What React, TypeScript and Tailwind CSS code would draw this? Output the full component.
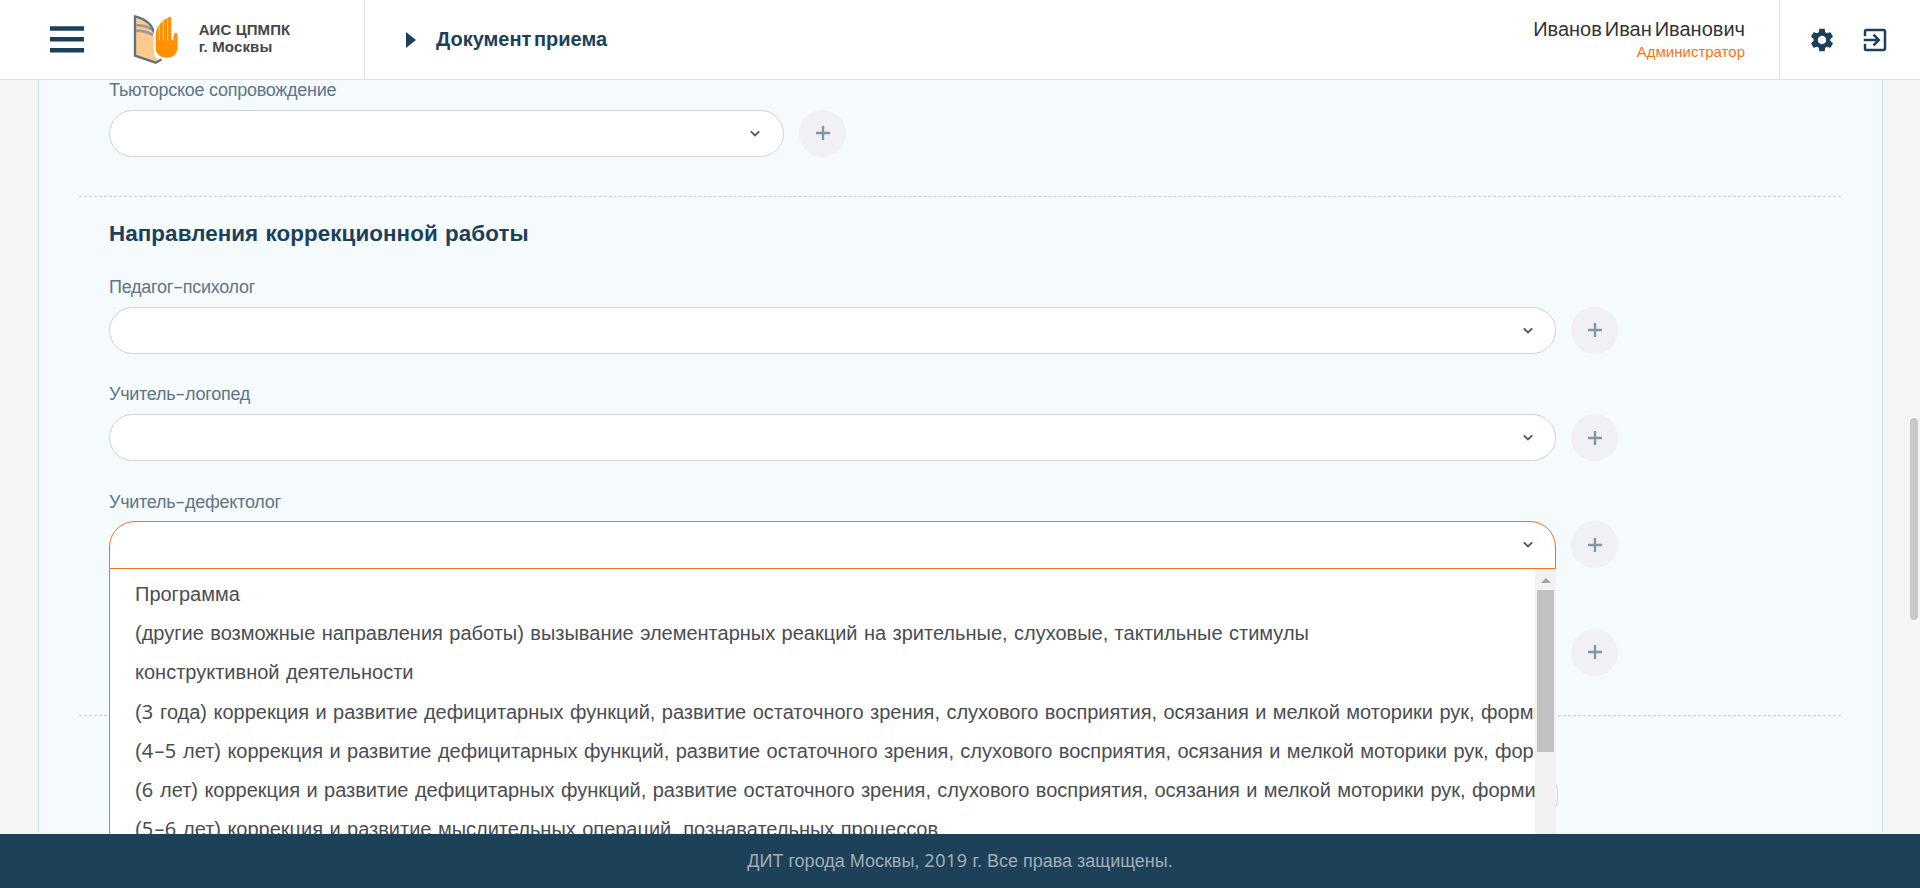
import { Fragment } from "react";
import { MdExitToApp, MdSettings } from "react-icons/md";

const OPTIONS = [
  "Программа",
  "(другие возможные направления работы) вызывание элементарных реакций на зрительные, слуховые, тактильные стимулы",
  "конструктивной деятельности",
  "(3 года) коррекция и развитие дефицитарных функций, развитие остаточного зрения, слухового восприятия, осязания и мелкой моторики рук, формирование",
  "(4-5 лет) коррекция и развитие дефицитарных функций, развитие остаточного зрения, слухового восприятия, осязания и мелкой моторики рук, формирование",
  "(6 лет) коррекция и развитие дефицитарных функций, развитие остаточного зрения, слухового восприятия, осязания и мелкой моторики рук, формирование",
  "(5-6 лет) коррекция и развитие мыслительных операций, познавательных процессов",
];

/** Sets digits in a humanist face and stretches hyphens. */
function Mixed({ text }: { text: string }) {
  return (
    <>
      {text.split(/(\d+|-)/).map((part, i) => {
        if (part === "-") return <span key={i} className="mx-[0.11em] inline-block scale-x-[1.7]">-</span>;
        if (/^\d+$/.test(part)) return <span key={i} className="font-['Noto_Sans',sans-serif] tracking-[0.5px]">{part}</span>;
        return <Fragment key={i}>{part}</Fragment>;
      })}
    </>
  );
}

function Logo() {
  return (
    <svg viewBox="40 24 140 153" className="h-[51px] w-[46.67px]" fill="none">
      <path d="M46 30 C72 36 94 50 104 78 L104 150 L118 164 L108 170 L46 150 Z" fill="#ffca8c" />
      <path d="M50 57 Q78 58 102 73 M50 74 Q76 74 100 87" stroke="#9a9a9c" strokeWidth="8" />
      <path d="M103 80 C98 54 72 36 46 31 V149 L108 170 L126 160" stroke="#5f7480" strokeWidth="7" />
      <path
        d="M108 82 C109 70 120 52 132 43 L148 33 Q155 31 155 38 V98 Q156 104 161 103 L162 88 Q164 80 170 81 Q174 82 174 88 V122 C174 144 160 155 141 155 C121 155 108 145 108 124 Z"
        fill="#fff"
        stroke="#fff"
        strokeWidth="12"
      />
      <path
        d="M108 82 C109 70 120 52 132 43 L148 33 Q155 31 155 38 V98 Q156 104 161 103 L162 88 Q164 80 170 81 Q174 82 174 88 V122 C174 144 160 155 141 155 C121 155 108 145 108 124 Z"
        fill="#ff9100"
      />
      <path d="M119 60 V104 M131 45 V102 M144 38 V103" stroke="#ffd09a" strokeWidth="3" />
    </svg>
  );
}

function AddButton() {
  return (
    <button className="flex size-[47px] shrink-0 items-center justify-center rounded-full bg-[#f0f0f5]">
      <svg viewBox="0 0 14 14" className="size-[14px]">
        <path d="M7 0V14M0 7H14" stroke="#8297a5" strokeWidth="2.4" />
      </svg>
    </button>
  );
}

function Chevron() {
  return (
    <svg viewBox="0 0 12 8" className="mt-[1px] h-[8px] w-[12px]" fill="none">
      <path d="M1.8 1.4L6 5.4L10.2 1.4" stroke="#5a5a5a" strokeWidth="2" />
    </svg>
  );
}

function Dropdown() {
  return (
    <div className="absolute top-[calc(100%+1px)] -right-px -left-px z-10 flex h-[320px] border-l border-[#f37021] bg-white">
      <ul className="min-w-0 flex-1 overflow-hidden pt-[6px] pl-[25px] text-[20px] text-[#4a4d52] [word-spacing:0.85px]">
        {OPTIONS.map((o) => (
          <li key={o} className="h-[39.1px] leading-[39.1px] whitespace-nowrap">
            <Mixed text={o} />
          </li>
        ))}
      </ul>
      <div className="flex w-[21px] flex-col items-center bg-[#f1f1f1]">
        <svg viewBox="0 0 10 5" className="mt-[9px] h-[5px] w-[10px]">
          <path d="M0 5L5 0L10 5Z" fill="#a3a3a3" />
        </svg>
        <div className="mt-[7px] h-[162px] w-[17px] bg-[#c1c1c1]" />
      </div>
    </div>
  );
}

function Field({ label, size = "w-[1447px] pr-[21px]", open = false }: { label: string; size?: string; open?: boolean }) {
  return (
    <div className="mb-[28.3px]">
      <div className="mb-[7.7px] h-[24px] text-[18px] leading-[24px] tracking-[-0.26px] text-[#5f7485]">
        <Mixed text={label} />
      </div>
      <div className="flex h-[47.3px] items-center gap-[15px]">
        <div
          className={`relative flex h-full shrink-0 items-center justify-end border bg-white ${size} ${
            open ? "rounded-t-[26px] border-[#f37021]" : "rounded-full border-[#d0d2d4]"
          }`}
        >
          <Chevron />
          {open && <Dropdown />}
        </div>
        <AddButton />
      </div>
    </div>
  );
}

function Header() {
  return (
    <header className="relative z-20 flex h-[80px] shrink-0 border-b border-[#e1e1e1] bg-white">
      <div className="flex w-[365px] items-center border-r border-[#e1e1e1] pl-[50px]">
        <svg viewBox="0 0 34 27" className="h-[27px] w-[34px]">
          <path d="M0 2.5H34M0 13.3H34M0 24.2H34" stroke="#1c4059" strokeWidth="4.6" />
        </svg>
        <div className="ml-[49px]">
          <Logo />
        </div>
        <div className="mt-[-3px] ml-[19px] text-[15px] leading-[17px] font-bold text-[#444749]">
          <div className="tracking-[0.1px]">АИС ЦПМПК</div>
          <div className="tracking-[0.15px]">г. Москвы</div>
        </div>
      </div>
      <div className="flex flex-1 items-center pl-[41px]">
        <svg viewBox="0 0 10 16" className="h-[16px] w-[10px]">
          <path d="M0 0L10 8L0 16Z" fill="#1c4059" />
        </svg>
        <h1 className="-mt-[2px] ml-[20px] text-[20px] leading-[24px] font-bold text-[#1c4059] [word-spacing:-3px]">Документ приема</h1>
      </div>
      <div className="flex flex-col items-end pt-[17px] pr-[34px]">
        <div className="text-[20px] leading-[24px] text-[#333] [word-spacing:-2.6px]">Иванов Иван Иванович</div>
        <div className="mt-px text-[15px] leading-[20px] text-[#f97316]">Администратор</div>
      </div>
      <div className="flex w-[141px] items-center border-l border-[#e1e1e1] pl-[28px] text-[#1c4059]">
        <MdSettings className="size-[28px]" />
        <MdExitToApp className="ml-[24px] size-[30px]" />
      </div>
    </header>
  );
}

export default function App() {
  return (
    <div className="relative flex h-[888px] flex-col overflow-hidden bg-[#f5f5f5] font-['Liberation_Sans',Arial,sans-serif]">
      <Header />
      <main className="min-h-0 flex-1">
        <div className="mr-[37px] ml-[38px] h-full border-x border-[#c0dfe6] bg-[#f5fafd] pr-[41px] pl-[40px]">
          <section className="-mt-[2px] h-[118px] pl-[30px]">
            <Field label="Тьюторское сопровождение" size="w-[675px] pr-[22px]" />
          </section>
          <section className="h-[519px] border-t border-dashed border-[#c9cdd0] pt-[21px] pl-[30px]">
            <h2 className="mb-[25px] text-[22.4px] leading-[32px] font-bold tracking-[0.07px] text-[#1c4059] [word-spacing:1px]">
              Направления коррекционной работы
            </h2>
            <Field label="Педагог-психолог" />
            <Field label="Учитель-логопед" />
            <Field label="Учитель-дефектолог" open />
            <Field label="" />
          </section>
          <section className="border-t border-dashed border-[#c9cdd0] pt-[56px] pl-[30px]">
            <div className="h-[47px] w-[1449px] rounded-[20px] border border-[#d0d2d4] bg-white" />
          </section>
        </div>
      </main>
      <footer className="relative z-20 flex h-[54px] shrink-0 items-center justify-center bg-[#1c4159] text-[18px] text-[#a4adb6]">
        <p><Mixed text="ДИТ города Москвы, 2019 г. Все права защищены." /></p>
      </footer>
      <div className="absolute top-[418px] right-[2px] h-[202px] w-[8px] rounded-full bg-[#c8c8c8]" />
    </div>
  );
}
